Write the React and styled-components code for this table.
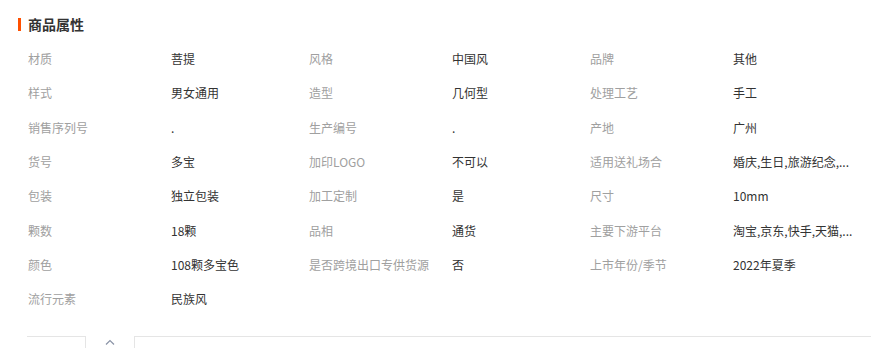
import React from "react";
import styled, { createGlobalStyle } from "styled-components";

const Global = createGlobalStyle`
  html, body { margin: 0; padding: 0; background: #fff; }
  body { font-family: "Noto Sans CJK SC", "Noto Sans", sans-serif; }
`;

const Panel = styled.section`
  width: 873px;
  height: 348px;
  overflow: hidden;
  box-sizing: border-box;
  padding: 14px 2px 0 18px;
`;

const Title = styled.h3`
  margin: 0;
  display: flex;
  align-items: center;
  gap: 7px;
  height: 20px;
  font-size: 14px;
  font-weight: 700;
  color: #333;
  line-height: 20px;
`;

const Bar = styled.span`
  width: 3px;
  height: 13px;
  background: #ff5000;
`;

const Grid = styled.div`
  display: grid;
  grid-template-columns: repeat(3, 281px);
  grid-auto-rows: 34.3px;
  margin: 8px 0 0 10px;
`;

const Cell = styled.div`
  display: grid;
  grid-template-columns: 143px 1fr;
  align-items: center;
  font-size: 12px;
  line-height: 16px;
`;

const Label = styled.span`
  color: #a0a0a0;
  white-space: nowrap;
`;

const Value = styled.span`
  color: #333;
  white-space: nowrap;
  overflow: hidden;
`;

const Footer = styled.div`
  display: flex;
  align-items: flex-start;
  margin: 20px 0 0 9px;
  height: 20px;
`;

const Edge = styled.div`
  box-sizing: border-box;
  height: 20px;
  border-top: 1px solid #e5e5e5;
  border-${(p) => p.side}: 1px solid #e5e5e5;
  width: ${(p) => (p.grow ? "auto" : `${p.w}px`)};
  flex: ${(p) => (p.grow ? 1 : "none")};
`;

const Toggle = styled.button`
  width: 48px;
  height: 14px;
  padding: 0;
  border: 0;
  background: transparent;
  display: flex;
  justify-content: center;
  align-items: flex-end;
  margin-top: -5px;
  cursor: pointer;
`;

const data = [
  ["材质", "菩提", "风格", "中国风", "品牌", "其他"],
  ["样式", "男女通用", "造型", "几何型", "处理工艺", "手工"],
  ["销售序列号", ".", "生产编号", ".", "产地", "广州"],
  ["货号", "多宝", "加印LOGO", "不可以", "适用送礼场合", "婚庆,生日,旅游纪念,..."],
  ["包装", "独立包装", "加工定制", "是", "尺寸", "10mm"],
  ["颗数", "18颗", "品相", "通货", "主要下游平台", "淘宝,京东,快手,天猫,..."],
  ["颜色", "108颗多宝色", "是否跨境出口专供货源", "否", "上市年份/季节", "2022年夏季"],
  ["流行元素", "民族风"],
];

export default function App() {
  return (
    <>
      <Global />
      <Panel>
        <Title>
          <Bar />
          商品属性
        </Title>
        <Grid>
          {data.flatMap((row, r) => {
            const cells = [];
            for (let i = 0; i < row.length; i += 2) {
              cells.push(
                <Cell key={`${r}-${i}`}>
                  <Label>{row[i]}</Label>
                  <Value>{row[i + 1]}</Value>
                </Cell>
              );
            }
            return cells;
          })}
        </Grid>
        <Footer>
          <Edge side="right" w={59} />
          <Toggle aria-label="收起">
            <svg width="10" height="6" viewBox="0 0 10 6">
              <path d="M1 5.5 L5 1.5 L9 5.5" fill="none" stroke="#8a93a6" strokeWidth="1.2" />
            </svg>
          </Toggle>
          <Edge side="left" grow />
        </Footer>
      </Panel>
    </>
  );
}
